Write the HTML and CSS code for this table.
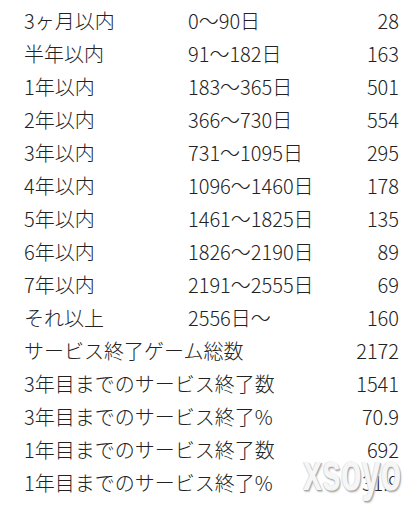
FILE: index.html
```html
<!DOCTYPE html>
<html lang="ja">
<head>
<meta charset="utf-8">
<link rel="stylesheet" href="styles.css">
</head>
<body>
<div class="sheet">
  <div class="row"><span class="c1">3ヶ月以内</span><span class="c2">0～90日</span><span class="c3">28</span></div>
  <div class="row"><span class="c1">半年以内</span><span class="c2">91～182日</span><span class="c3">163</span></div>
  <div class="row"><span class="c1">1年以内</span><span class="c2">183～365日</span><span class="c3">501</span></div>
  <div class="row"><span class="c1">2年以内</span><span class="c2">366～730日</span><span class="c3">554</span></div>
  <div class="row"><span class="c1">3年以内</span><span class="c2">731～1095日</span><span class="c3">295</span></div>
  <div class="row"><span class="c1">4年以内</span><span class="c2">1096～1460日</span><span class="c3">178</span></div>
  <div class="row"><span class="c1">5年以内</span><span class="c2">1461～1825日</span><span class="c3">135</span></div>
  <div class="row"><span class="c1">6年以内</span><span class="c2">1826～2190日</span><span class="c3">89</span></div>
  <div class="row"><span class="c1">7年以内</span><span class="c2">2191～2555日</span><span class="c3">69</span></div>
  <div class="row"><span class="c1">それ以上</span><span class="c2">2556日～</span><span class="c3">160</span></div>
  <div class="row"><span class="c1 wide">サービス終了ゲーム総数</span><span class="c3">2172</span></div>
  <div class="row"><span class="c1 wide">3年目までのサービス終了数</span><span class="c3">1541</span></div>
  <div class="row"><span class="c1 wide">3年目までのサービス終了%</span><span class="c3">70.9</span></div>
  <div class="row"><span class="c1 wide">1年目までのサービス終了数</span><span class="c3">692</span></div>
  <div class="row"><span class="c1 wide">1年目までのサービス終了%</span><span class="c3">31.9</span></div>
  <div class="watermark">xsoyo</div>
</div>
</body>
</html>
```
FILE: styles.css
```css
html, body {
  margin: 0;
  padding: 0;
  background: #ffffff;
}
.sheet {
  position: relative;
  width: 417px;
  height: 507px;
  padding-top: 4px;
  box-sizing: border-box;
  overflow: hidden;
  font-family: "Noto Sans CJK JP", "Noto Sans", sans-serif;
  font-size: 20px;
  font-weight: 300;
  color: #222222;
}
.row {
  display: flex;
  align-items: center;
  height: 33px;
  padding: 0 18px 0 24px;
  white-space: nowrap;
}
.c1 {
  width: 164px;
  flex: none;
}
.c1.wide {
  width: auto;
  flex: 1;
}
.c2 {
  flex: 1;
}
.c3 {
  text-align: right;
  margin-left: auto;
}
.watermark {
  position: absolute;
  left: 303px;
  top: 444px;
  font-family: "Liberation Sans", sans-serif;
  font-weight: bold;
  font-size: 54px;
  line-height: 54px;
  color: #f6f6f6;
  transform: scaleX(0.63);
  transform-origin: left top;
  text-shadow: 1px 1px 0 #a8a8a8, 2px 2px 2px #c4c4c4, -1px 0 1px #d8d8d8;
}
```
